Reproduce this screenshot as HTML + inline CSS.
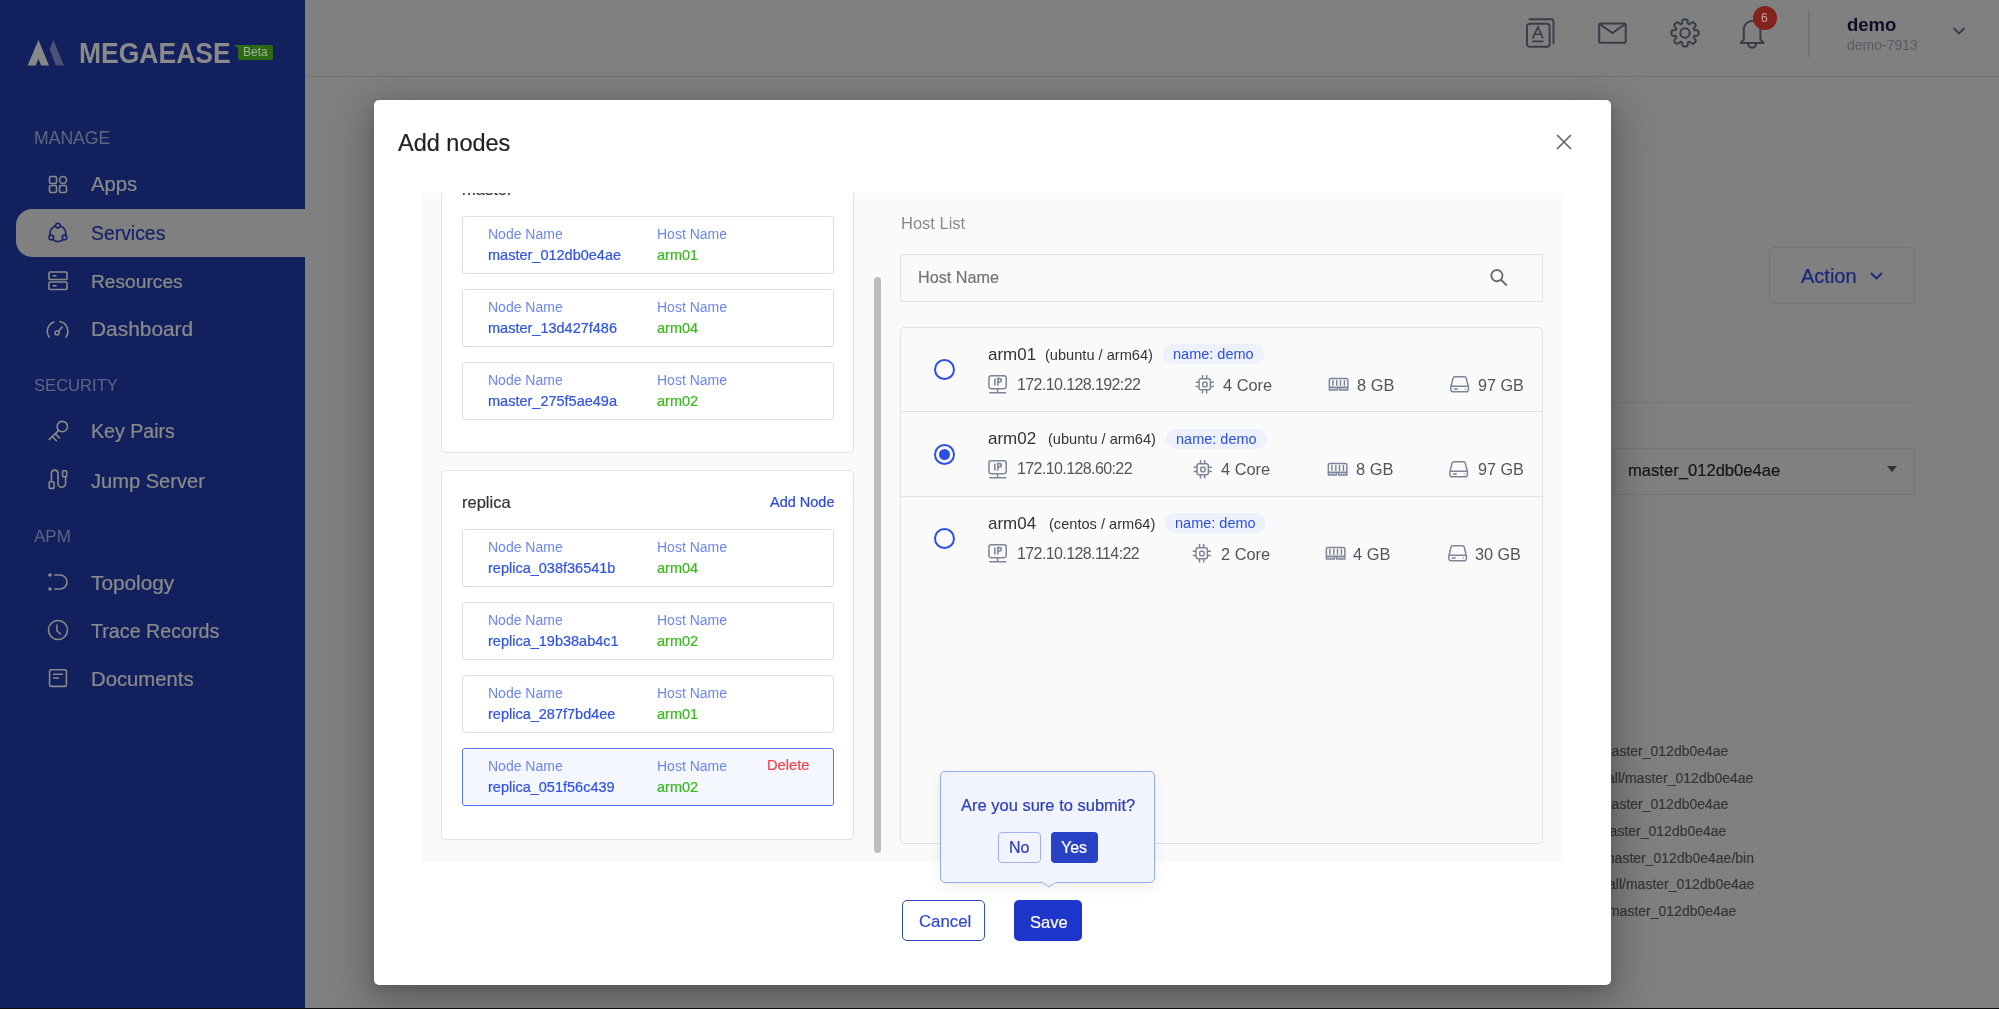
<!DOCTYPE html>
<html><head><meta charset="utf-8"><title>Add nodes</title>
<style>
html,body{margin:0;padding:0;}
body{width:1999px;height:1009px;overflow:hidden;position:relative;font-family:"Liberation Sans", sans-serif;}
.b{position:absolute;}
.t{position:absolute;white-space:nowrap;will-change:transform;}
.m{-webkit-text-stroke:0.22px currentColor;}
.m2{-webkit-text-stroke:0.2px currentColor;}
</style></head><body>
<div class="b" style="left:0px;top:0px;width:1999px;height:1009px;background:#808080;"></div>
<div class="b" style="left:305px;top:76px;width:1694px;height:1px;background:#6f7377;"></div>
<div class="b" style="left:0px;top:0px;width:305px;height:1008px;background:#12205e;"></div>
<svg class="b" style="left:24px;top:34px;" width="46" height="36" viewBox="0 0 46 36" fill="none"><path d="M14.45 5.9 L24.98 31.6 L17.1 31.6 L14.45 24.8 L11.8 31.6 L3.57 31.6 Z" fill="#878787"/><path d="M29.4 5.9 L40 31.6 L31.9 31.6 L25.7 15.3 Z" fill="#4a5276"/></svg>
<div class="t " style="left:79.00px;top:40.77px;font-size:26.5px;line-height:26.5px;color:#8a8a8a;font-weight:700;letter-spacing:0px;transform:scaleY(1.09);transform-origin:0 83%;">MEGAEASE</div>
<svg class="b" style="left:234px;top:44px" width="40" height="18" viewBox="0 0 40 18"><path d="M0 1 L4 1 Q4 1 4 1 L37 1 A2 2 0 0 1 39 3 L39 14 A2 2 0 0 1 37 16 L6 16 A2 2 0 0 1 4 14 L4 4 Z" fill="#2b6a12"/></svg>
<div class="t " style="left:243.00px;top:46.34px;font-size:12px;line-height:12px;color:#9fb59c;">Beta</div>
<div class="t " style="left:34.00px;top:129.60px;font-size:17.6px;line-height:17.6px;color:#5e6584;">MANAGE</div>
<div class="t " style="left:34.00px;top:377.95px;font-size:16.6px;line-height:16.6px;color:#5e6584;">SECURITY</div>
<div class="t " style="left:34.00px;top:528.21px;font-size:17px;line-height:17px;color:#5e6584;">APM</div>
<div class="b" style="left:16px;top:209px;width:289px;height:48px;background:#808080;border-radius:16px 0 0 16px;"></div>
<div class="t m" style="left:91.00px;top:174.02px;font-size:20.3px;line-height:20.3px;color:#8a8a8a;">Apps</div>
<div class="t m" style="left:91.00px;top:223.78px;font-size:19.4px;line-height:19.4px;color:#17226a;">Services</div>
<div class="t m" style="left:91.00px;top:272.35px;font-size:19.2px;line-height:19.2px;color:#8a8a8a;">Resources</div>
<div class="t m" style="left:91.00px;top:319.31px;font-size:20.9px;line-height:20.9px;color:#8a8a8a;">Dashboard</div>
<div class="t m" style="left:91.00px;top:422.41px;font-size:19.6px;line-height:19.6px;color:#8a8a8a;">Key Pairs</div>
<div class="t m" style="left:91.00px;top:470.99px;font-size:20.1px;line-height:20.1px;color:#8a8a8a;">Jump Server</div>
<div class="t m" style="left:91.00px;top:572.89px;font-size:20.8px;line-height:20.8px;color:#8a8a8a;">Topology</div>
<div class="t m" style="left:91.00px;top:621.62px;font-size:19.7px;line-height:19.7px;color:#8a8a8a;">Trace Records</div>
<div class="t m" style="left:91.00px;top:668.82px;font-size:20.3px;line-height:20.3px;color:#8a8a8a;">Documents</div>
<svg class="b" style="left:48px;top:175px;" width="20" height="20" viewBox="0 0 20 20" fill="none"><g stroke="#8a8a8a" stroke-width="1.6"><rect x="1.5" y="1.5" width="7" height="7" rx="1.5"/><rect x="11.5" y="1.5" width="7" height="7" rx="3.5"/><rect x="1.5" y="10.5" width="7" height="7" rx="1.5"/><rect x="11.5" y="10.5" width="7" height="7" rx="1.5"/></g></svg>
<svg class="b" style="left:47px;top:222px;" width="22" height="22" viewBox="0 0 22 22" fill="none"><g stroke="#17226a" stroke-width="1.6"><circle cx="10.9" cy="3.6" r="2.3"/><circle cx="4.3" cy="15.4" r="2.3"/><circle cx="17.5" cy="15.4" r="2.3"/><path d="M13.64 4.08 A8 8 0 0 1 18.78 12.99 M16.04 17.73 A8 8 0 0 1 5.76 17.73 M3.02 12.99 A8 8 0 0 1 8.16 4.08"/></g></svg>
<svg class="b" style="left:48px;top:271px;" width="20" height="20" viewBox="0 0 20 20" fill="none"><g stroke="#8a8a8a" stroke-width="1.6"><rect x="1" y="1" width="18" height="7.5" rx="1"/><rect x="1" y="11" width="18" height="7.5" rx="1"/><path d="M4.5 4.8 H8.5 M4.5 14.8 H8.5"/></g></svg>
<svg class="b" style="left:46px;top:318px;" width="24" height="22" viewBox="0 0 24 22" fill="none"><g stroke="#8a8a8a" stroke-width="1.6" stroke-linecap="round"><path d="M3 19 A10 10 0 0 1 8 4 M14 3.5 A10 10 0 0 1 20 19"/><circle cx="11" cy="15" r="2"/><path d="M12.5 13.5 L16 9"/></g></svg>
<svg class="b" style="left:47px;top:420px;" width="22" height="22" viewBox="0 0 22 22" fill="none"><g stroke="#8a8a8a" stroke-width="1.6" stroke-linecap="round"><circle cx="15.3" cy="6.6" r="5.2"/><path d="M11.7 10.4 L2.3 19.4 M8.9 14.4 L12.4 17.9 M6 17.3 L9.4 20.8"/></g></svg>
<svg class="b" style="left:48px;top:469px;" width="22" height="22" viewBox="0 0 22 22" fill="none"><g stroke="#8a8a8a" stroke-width="1.6"><rect x="1.2" y="12.8" width="4.8" height="6.6" rx="0.8"/><rect x="14.6" y="1.8" width="4" height="6" rx="0.8"/><path d="M3.4 12.8 V4.4 A3.3 3.3 0 0 1 10 4.4 V14.4 A3.8 3.8 0 0 0 17.6 14.4 V7.8" fill="none"/></g></svg>
<svg class="b" style="left:47px;top:572px;" width="22" height="20" viewBox="0 0 22 20" fill="none"><g stroke="#8a8a8a" stroke-width="1.6" stroke-linecap="round"><circle cx="3" cy="3" r="1" fill="#8a8a8a"/><circle cx="3" cy="17" r="1" fill="#8a8a8a"/><path d="M8 3 H13 A7 7 0 0 1 13 17 H8"/></g></svg>
<svg class="b" style="left:47px;top:619px;" width="22" height="22" viewBox="0 0 22 22" fill="none"><g stroke="#8a8a8a" stroke-width="1.6" stroke-linecap="round"><circle cx="11" cy="11" r="9.5"/><path d="M10 6 V12 L13.5 15"/></g></svg>
<svg class="b" style="left:48px;top:668px;" width="20" height="20" viewBox="0 0 20 20" fill="none"><g stroke="#8a8a8a" stroke-width="1.6"><rect x="1.6" y="1.8" width="16.8" height="16.6" rx="1.5"/><path d="M5 6.3 H15 M5 10 H11"/></g></svg>
<svg class="b" style="left:1524px;top:17px;" width="32" height="32" viewBox="0 0 32 32" fill="none"><g stroke="#373c47" stroke-width="1.9" stroke-linecap="round"><rect x="3" y="6.8" width="22.6" height="23" rx="2.8"/><path d="M5.5 2.3 H27 A2.5 2.5 0 0 1 29.5 4.8 V26.3"/><path d="M8.9 20.8 L13.9 9.9 L18.7 20.8 M10.6 17.2 H17.1 M8.7 24.4 H19" stroke-width="1.6"/></g></svg>
<svg class="b" style="left:1597px;top:21px;" width="31" height="24" viewBox="0 0 31 24" fill="none"><g stroke="#373c47" stroke-width="2" stroke-linejoin="round"><rect x="2.2" y="2.4" width="26.5" height="19.4" rx="1.6"/><path d="M2.6 3 L15.4 12 L28.2 3"/></g></svg>
<svg class="b" style="left:1668.6px;top:17.1px;" width="32" height="32" viewBox="0 0 32 32" fill="none"><g stroke="#373c47" stroke-width="2" stroke-linejoin="round"><path d="M13.13 6.63 Q13.03 2.73 14.58 2.47 A13.6 13.6 0 0 1 17.42 2.47 Q18.97 2.73 18.87 6.63 A9.8 9.8 0 0 1 20.60 7.35 Q23.29 4.52 24.56 5.43 A13.6 13.6 0 0 1 26.57 7.44 Q27.48 8.71 24.65 11.40 A9.8 9.8 0 0 1 25.37 13.13 Q29.27 13.03 29.53 14.58 A13.6 13.6 0 0 1 29.53 17.42 Q29.27 18.97 25.37 18.87 A9.8 9.8 0 0 1 24.65 20.60 Q27.48 23.29 26.57 24.56 A13.6 13.6 0 0 1 24.56 26.57 Q23.29 27.48 20.60 24.65 A9.8 9.8 0 0 1 18.87 25.37 Q18.97 29.27 17.42 29.53 A13.6 13.6 0 0 1 14.58 29.53 Q13.03 29.27 13.13 25.37 A9.8 9.8 0 0 1 11.40 24.65 Q8.71 27.48 7.44 26.57 A13.6 13.6 0 0 1 5.43 24.56 Q4.52 23.29 7.35 20.60 A9.8 9.8 0 0 1 6.63 18.87 Q2.73 18.97 2.47 17.42 A13.6 13.6 0 0 1 2.47 14.58 Q2.73 13.03 6.63 13.13 A9.8 9.8 0 0 1 7.35 11.40 Q4.52 8.71 5.43 7.44 A13.6 13.6 0 0 1 7.44 5.43 Q8.71 4.52 11.40 7.35 A9.8 9.8 0 0 1 13.13 6.63 Z"/><circle cx="16" cy="16" r="4.7"/></g></svg>
<svg class="b" style="left:1739px;top:18px;" width="28" height="33" viewBox="0 0 28 33" fill="none"><g stroke="#373c47" stroke-width="2" stroke-linejoin="round"><path d="M1.8 25 H24.5 L21.4 21.5 V11.2 A8.3 8.3 0 0 0 4.8 11.2 V21.5 Z"/><path d="M9 25.6 A4.1 4.1 0 0 0 17.2 25.6"/></g></svg>
<div class="b" style="left:1753px;top:6px;width:24px;height:24px;border-radius:50%;background:#82231d;"></div>
<div class="t " style="left:1761.30px;top:12.44px;font-size:12px;line-height:12px;color:#c9a19d;">6</div>
<div class="b" style="left:1808px;top:10px;width:2px;height:47px;background:#737373;"></div>
<div class="t " style="left:1847.00px;top:16.24px;font-size:18.5px;line-height:18.5px;color:#0b0e25;font-weight:700;">demo</div>
<div class="t " style="left:1847.00px;top:37.85px;font-size:14px;line-height:14px;color:#5a5c66;">demo-7913</div>
<svg class="b" style="left:1952px;top:26px;" width="14" height="11" viewBox="0 0 14 11" fill="none"><path d="M1.5 2 L7 7.5 L12.5 2" stroke="#373c47" stroke-width="1.8" fill="none"/></svg>
<div class="b" style="left:1769px;top:247px;width:146px;height:57px;border:1px solid #747474;border-radius:5px;box-sizing:border-box;"></div>
<div class="t m" style="left:1801.00px;top:265.87px;font-size:20px;line-height:20px;color:#18287f;">Action</div>
<svg class="b" style="left:1869px;top:270px;" width="16" height="12" viewBox="0 0 16 12" fill="none"><path d="M2 3 L7.5 8.5 L13 3" stroke="#18287f" stroke-width="1.8" fill="none"/></svg>
<div class="b" style="left:1600px;top:402px;width:315px;height:1px;background:#787878;"></div>
<div class="b" style="left:1614px;top:448px;width:301px;height:47px;border:1px solid #747474;border-radius:3px;box-sizing:border-box;"></div>
<div class="t m2" style="left:1628.00px;top:462.95px;font-size:16.6px;line-height:16.6px;color:#151515;">master_012db0e4ae</div>
<svg class="b" style="left:1886px;top:465px;" width="12" height="8" viewBox="0 0 12 8" fill="none"><path d="M1 1 L11 1 L6 7 Z" fill="#333"/></svg>
<div class="t m2" style="right:270.60px;top:743.90px;font-size:14px;line-height:14px;color:#363636;">megaease/install/master_012db0e4ae</div>
<div class="t m2" style="right:246.10px;top:770.95px;font-size:14px;line-height:14px;color:#363636;">megaease/install/master_012db0e4ae</div>
<div class="t m2" style="right:270.70px;top:797.05px;font-size:14px;line-height:14px;color:#363636;">megaease/install/master_012db0e4ae</div>
<div class="t m2" style="right:272.60px;top:824.05px;font-size:14px;line-height:14px;color:#363636;">megaease/install/master_012db0e4ae</div>
<div class="t m2" style="right:245.30px;top:850.75px;font-size:14px;line-height:14px;color:#363636;">megaease/install/master_012db0e4ae/bin</div>
<div class="t m2" style="right:245.00px;top:877.35px;font-size:14px;line-height:14px;color:#363636;">megaease/install/master_012db0e4ae</div>
<div class="t m2" style="right:262.20px;top:904.15px;font-size:14px;line-height:14px;color:#363636;">megaease/install/master_012db0e4ae</div>
<div class="b" style="left:373.6px;top:100.4px;width:1237.6px;height:884.7px;background:#fff;border-radius:5px;box-shadow:0 12px 40px 8px rgba(0,0,0,0.25), 0 4px 12px rgba(0,0,0,0.14);"></div>
<div class="t m2" style="left:398.00px;top:131.81px;font-size:23.5px;line-height:23.5px;color:#222222;">Add nodes</div>
<svg class="b" style="left:1555px;top:133px;" width="18" height="18" viewBox="0 0 18 18" fill="none"><path d="M2 2 L16 16 M16 2 L2 16" stroke="#666" stroke-width="1.7"/></svg>
<div class="b" style="left:422px;top:193px;width:1141px;height:669px;background:#fafafa;"></div>
<div class="b" style="left:441px;top:193px;width:413px;height:669px;overflow:hidden;">
<div class="b" style="left:0px;top:-60px;width:413px;height:320px;background:#fff;border:1px solid #e3e3e3;border-radius:4px;box-sizing:border-box;"></div>
<div class="b" style="left:0px;top:277px;width:413px;height:370px;background:#fff;border:1px solid #e3e3e3;border-radius:4px;box-sizing:border-box;"></div>
</div>
<div class="b" style="left:441px;top:193px;width:413px;height:4px;overflow:hidden;">
<div class="t m2" style="left:21.00px;top:-12.27px;font-size:16.5px;line-height:16.5px;color:#333;">master</div>
<div class="t " style="left:329.00px;top:-11.57px;font-size:14.5px;line-height:14.5px;color:#c8d1f5;">Add Node</div>
</div>
<div class="b" style="left:462px;top:215.5px;width:372px;height:58.0px;background:#fff;border:1.5px solid #dedede;border-radius:3px;box-sizing:border-box;"></div>
<div class="t " style="left:487.50px;top:227.15px;font-size:14px;line-height:14px;color:#6b86f2;">Node Name</div>
<div class="t m" style="left:487.50px;top:248.03px;font-size:14.5px;line-height:14.5px;color:#3053e6;">master_012db0e4ae</div>
<div class="t " style="left:656.50px;top:227.15px;font-size:14px;line-height:14px;color:#6b86f2;">Host Name</div>
<div class="t m" style="left:656.50px;top:248.03px;font-size:14.5px;line-height:14.5px;color:#3cb81e;">arm01</div>
<div class="b" style="left:462px;top:288.5px;width:372px;height:58.0px;background:#fff;border:1.5px solid #dedede;border-radius:3px;box-sizing:border-box;"></div>
<div class="t " style="left:487.50px;top:300.15px;font-size:14px;line-height:14px;color:#6b86f2;">Node Name</div>
<div class="t m" style="left:487.50px;top:321.03px;font-size:14.5px;line-height:14.5px;color:#3053e6;">master_13d427f486</div>
<div class="t " style="left:656.50px;top:300.15px;font-size:14px;line-height:14px;color:#6b86f2;">Host Name</div>
<div class="t m" style="left:656.50px;top:321.03px;font-size:14.5px;line-height:14.5px;color:#3cb81e;">arm04</div>
<div class="b" style="left:462px;top:361.5px;width:372px;height:58.0px;background:#fff;border:1.5px solid #dedede;border-radius:3px;box-sizing:border-box;"></div>
<div class="t " style="left:487.50px;top:373.15px;font-size:14px;line-height:14px;color:#6b86f2;">Node Name</div>
<div class="t m" style="left:487.50px;top:394.03px;font-size:14.5px;line-height:14.5px;color:#3053e6;">master_275f5ae49a</div>
<div class="t " style="left:656.50px;top:373.15px;font-size:14px;line-height:14px;color:#6b86f2;">Host Name</div>
<div class="t m" style="left:656.50px;top:394.03px;font-size:14.5px;line-height:14.5px;color:#3cb81e;">arm02</div>
<div class="t m2" style="left:462.00px;top:493.63px;font-size:16.5px;line-height:16.5px;color:#333333;">replica</div>
<div class="t m2" style="right:1165.00px;top:494.73px;font-size:14.5px;line-height:14.5px;color:#2b48de;">Add Node</div>
<div class="b" style="left:462px;top:528.5px;width:372px;height:58.0px;background:#fff;border:1.5px solid #dedede;border-radius:3px;box-sizing:border-box;"></div>
<div class="t " style="left:487.50px;top:540.15px;font-size:14px;line-height:14px;color:#6b86f2;">Node Name</div>
<div class="t m" style="left:487.50px;top:561.03px;font-size:14.5px;line-height:14.5px;color:#3053e6;">replica_038f36541b</div>
<div class="t " style="left:656.50px;top:540.15px;font-size:14px;line-height:14px;color:#6b86f2;">Host Name</div>
<div class="t m" style="left:656.50px;top:561.03px;font-size:14.5px;line-height:14.5px;color:#3cb81e;">arm04</div>
<div class="b" style="left:462px;top:601.5px;width:372px;height:58.0px;background:#fff;border:1.5px solid #dedede;border-radius:3px;box-sizing:border-box;"></div>
<div class="t " style="left:487.50px;top:613.15px;font-size:14px;line-height:14px;color:#6b86f2;">Node Name</div>
<div class="t m" style="left:487.50px;top:634.03px;font-size:14.5px;line-height:14.5px;color:#3053e6;">replica_19b38ab4c1</div>
<div class="t " style="left:656.50px;top:613.15px;font-size:14px;line-height:14px;color:#6b86f2;">Host Name</div>
<div class="t m" style="left:656.50px;top:634.03px;font-size:14.5px;line-height:14.5px;color:#3cb81e;">arm02</div>
<div class="b" style="left:462px;top:674.5px;width:372px;height:58.0px;background:#fff;border:1.5px solid #dedede;border-radius:3px;box-sizing:border-box;"></div>
<div class="t " style="left:487.50px;top:686.15px;font-size:14px;line-height:14px;color:#6b86f2;">Node Name</div>
<div class="t m" style="left:487.50px;top:707.03px;font-size:14.5px;line-height:14.5px;color:#3053e6;">replica_287f7bd4ee</div>
<div class="t " style="left:656.50px;top:686.15px;font-size:14px;line-height:14px;color:#6b86f2;">Host Name</div>
<div class="t m" style="left:656.50px;top:707.03px;font-size:14.5px;line-height:14.5px;color:#3cb81e;">arm01</div>
<div class="b" style="left:462px;top:747.5px;width:372px;height:58.0px;background:#f4f7fe;border:1.8px solid #5675f0;border-radius:3px;box-sizing:border-box;"></div>
<div class="t " style="left:487.50px;top:759.15px;font-size:14px;line-height:14px;color:#6b86f2;">Node Name</div>
<div class="t m" style="left:487.50px;top:780.03px;font-size:14.5px;line-height:14.5px;color:#3053e6;">replica_051f56c439</div>
<div class="t " style="left:656.50px;top:759.15px;font-size:14px;line-height:14px;color:#6b86f2;">Host Name</div>
<div class="t m" style="left:656.50px;top:780.03px;font-size:14.5px;line-height:14.5px;color:#3cb81e;">arm02</div>
<div class="t m2" style="left:766.50px;top:758.36px;font-size:14.7px;line-height:14.7px;color:#f2424b;">Delete</div>
<div class="b" style="left:874px;top:277px;width:7px;height:576px;background:#bdbdbd;border-radius:4px;"></div>
<div class="t " style="left:901.00px;top:214.83px;font-size:16.5px;line-height:16.5px;color:#8a8a8a;">Host List</div>
<div class="b" style="left:900px;top:254px;width:643px;height:48px;border:1px solid #e0e0e0;border-radius:2px;box-sizing:border-box;background:#fafafa;"></div>
<div class="t m2" style="left:918.00px;top:268.69px;font-size:16.2px;line-height:16.2px;color:#747474;">Host Name</div>
<svg class="b" style="left:1488px;top:266px;" width="22" height="22" viewBox="0 0 22 22" fill="none"><g stroke="#6e6e6e" stroke-width="1.9"><circle cx="8.9" cy="9.6" r="5.6"/><path d="M12.8 13.5 L18.8 19.5"/></g></svg>
<div class="b" style="left:900px;top:327px;width:643px;height:517px;border:1px solid #e3e3e3;border-radius:4px;box-sizing:border-box;background:#fafafa;"></div>
<div class="b" style="left:901px;top:411px;width:641px;height:1px;background:#e3e3e3;"></div>
<div class="b" style="left:901px;top:496px;width:641px;height:1px;background:#e3e3e3;"></div>
<div class="b" style="left:934px;top:359.0px;width:21px;height:21px;border:2px solid #2b4fe6;border-radius:50%;box-sizing:border-box;"></div>
<div class="t " style="left:987.50px;top:345.81px;font-size:17px;line-height:17px;color:#333333;">arm01</div>
<div class="t " style="left:1044.50px;top:347.84px;font-size:14.6px;line-height:14.6px;color:#333333;">(ubuntu / arm64)</div>
<div class="b" style="left:1163px;top:344px;width:101px;height:20px;background:#edf1fd;border-radius:10px;"></div>
<div class="t " style="left:1172.50px;top:347.13px;font-size:14.5px;line-height:14.5px;color:#2c4ee2;">name: demo</div>
<svg class="b" style="left:988px;top:375px;" width="20" height="20" viewBox="0 0 20 20" fill="none"><g stroke="#7f8598" stroke-width="1.5"><rect x="0.95" y="0.75" width="17.3" height="12.9" rx="2.3"/><path d="M9.6 13.6 V17.6 M1.2 17.7 H18.2"/><path d="M6.9 3.5 V10.5 M9.9 10.5 V3.6 H11.6 A1.7 1.7 0 0 1 11.6 7 H9.9" stroke-width="1.6"/></g></svg>
<div class="t " style="left:1016.50px;top:376.96px;font-size:16px;line-height:16px;color:#555555;letter-spacing:-0.6px;">172.10.128.192:22</div>
<svg class="b" style="left:1194.7px;top:374px;" width="20" height="20" viewBox="0 0 20 20" fill="none"><g stroke="#7f8598" stroke-width="1.5"><rect x="4.05" y="4.75" width="11.3" height="11.1" rx="2"/><rect x="7.75" y="8.15" width="4.3" height="4.6" rx="1.2"/><path d="M7.5 1 V4.75 M11.7 1 V4.75 M7.5 15.85 V19.4 M11.7 15.85 V19.4 M0.7 8.2 H4.05 M0.7 12.4 H4.05 M15.35 8.2 H18.9 M15.35 12.4 H18.9"/></g></svg>
<div class="t " style="left:1222.80px;top:376.62px;font-size:16.4px;line-height:16.4px;color:#555555;">4 Core</div>
<svg class="b" style="left:1328.4px;top:377px;" width="22" height="15" viewBox="0 0 22 15" fill="none"><g stroke="#7f8598" stroke-width="1.5" stroke-linejoin="round"><path d="M1.35 10.2 V2.9 A1.45 1.45 0 0 1 2.8 1.45 H18.4 A1.45 1.45 0 0 1 19.85 2.9 V10.2 Z M1.35 10.2 V13.05 H9.4 L9.7 10.2 M11.5 10.2 L11.8 13.05 H19.85 V10.2"/><path d="M2.2 11.6 H8.6 M12.6 11.6 H19" stroke-opacity="0.45" stroke-width="1.3"/><path d="M4.9 3.6 V8.2 M8.8 3.6 V8.2 M12.5 3.6 V8.2 M16.4 3.6 V8.2" stroke-linecap="round"/></g></svg>
<div class="t " style="left:1357.00px;top:376.62px;font-size:16.4px;line-height:16.4px;color:#555555;">8 GB</div>
<svg class="b" style="left:1450.4px;top:376px;" width="20" height="17" viewBox="0 0 20 17" fill="none"><g stroke="#7f8598" stroke-width="1.5" stroke-linejoin="round"><path d="M0.85 11 L2.9 2.6 Q3.3 0.75 5 0.75 H14.3 Q16 0.75 16.4 2.6 L18.45 11 V13.6 A2.15 2.15 0 0 1 16.3 15.75 H3 A2.15 2.15 0 0 1 0.85 13.6 Z M1.2 10.3 H18.1"/><path d="M4.3 13 H7.2" stroke-width="1.5" stroke-linecap="round"/><path d="M15.4 12.5 V13.5" stroke-width="1.3"/></g></svg>
<div class="t " style="left:1477.70px;top:376.79px;font-size:16.2px;line-height:16.2px;color:#555555;">97 GB</div>
<div class="b" style="left:934px;top:443.5px;width:21px;height:21px;border:2px solid #2b4fe6;border-radius:50%;box-sizing:border-box;"></div>
<div class="b" style="left:939px;top:448.5px;width:11px;height:11px;background:#2b4fe6;border-radius:50%;"></div>
<div class="t " style="left:987.50px;top:430.31px;font-size:17px;line-height:17px;color:#333333;">arm02</div>
<div class="t " style="left:1047.50px;top:432.34px;font-size:14.6px;line-height:14.6px;color:#333333;">(ubuntu / arm64)</div>
<div class="b" style="left:1166px;top:428.5px;width:101px;height:20px;background:#edf1fd;border-radius:10px;"></div>
<div class="t " style="left:1175.50px;top:431.63px;font-size:14.5px;line-height:14.5px;color:#2c4ee2;">name: demo</div>
<svg class="b" style="left:988px;top:459.5px;" width="20" height="20" viewBox="0 0 20 20" fill="none"><g stroke="#7f8598" stroke-width="1.5"><rect x="0.95" y="0.75" width="17.3" height="12.9" rx="2.3"/><path d="M9.6 13.6 V17.6 M1.2 17.7 H18.2"/><path d="M6.9 3.5 V10.5 M9.9 10.5 V3.6 H11.6 A1.7 1.7 0 0 1 11.6 7 H9.9" stroke-width="1.6"/></g></svg>
<div class="t " style="left:1016.50px;top:461.46px;font-size:16px;line-height:16px;color:#555555;letter-spacing:-0.6px;">172.10.128.60:22</div>
<svg class="b" style="left:1192.7px;top:458.5px;" width="20" height="20" viewBox="0 0 20 20" fill="none"><g stroke="#7f8598" stroke-width="1.5"><rect x="4.05" y="4.75" width="11.3" height="11.1" rx="2"/><rect x="7.75" y="8.15" width="4.3" height="4.6" rx="1.2"/><path d="M7.5 1 V4.75 M11.7 1 V4.75 M7.5 15.85 V19.4 M11.7 15.85 V19.4 M0.7 8.2 H4.05 M0.7 12.4 H4.05 M15.35 8.2 H18.9 M15.35 12.4 H18.9"/></g></svg>
<div class="t " style="left:1220.80px;top:461.12px;font-size:16.4px;line-height:16.4px;color:#555555;">4 Core</div>
<svg class="b" style="left:1327.4px;top:461.5px;" width="22" height="15" viewBox="0 0 22 15" fill="none"><g stroke="#7f8598" stroke-width="1.5" stroke-linejoin="round"><path d="M1.35 10.2 V2.9 A1.45 1.45 0 0 1 2.8 1.45 H18.4 A1.45 1.45 0 0 1 19.85 2.9 V10.2 Z M1.35 10.2 V13.05 H9.4 L9.7 10.2 M11.5 10.2 L11.8 13.05 H19.85 V10.2"/><path d="M2.2 11.6 H8.6 M12.6 11.6 H19" stroke-opacity="0.45" stroke-width="1.3"/><path d="M4.9 3.6 V8.2 M8.8 3.6 V8.2 M12.5 3.6 V8.2 M16.4 3.6 V8.2" stroke-linecap="round"/></g></svg>
<div class="t " style="left:1356.00px;top:461.12px;font-size:16.4px;line-height:16.4px;color:#555555;">8 GB</div>
<svg class="b" style="left:1449.4px;top:460.5px;" width="20" height="17" viewBox="0 0 20 17" fill="none"><g stroke="#7f8598" stroke-width="1.5" stroke-linejoin="round"><path d="M0.85 11 L2.9 2.6 Q3.3 0.75 5 0.75 H14.3 Q16 0.75 16.4 2.6 L18.45 11 V13.6 A2.15 2.15 0 0 1 16.3 15.75 H3 A2.15 2.15 0 0 1 0.85 13.6 Z M1.2 10.3 H18.1"/><path d="M4.3 13 H7.2" stroke-width="1.5" stroke-linecap="round"/><path d="M15.4 12.5 V13.5" stroke-width="1.3"/></g></svg>
<div class="t " style="left:1477.70px;top:461.29px;font-size:16.2px;line-height:16.2px;color:#555555;">97 GB</div>
<div class="b" style="left:934px;top:528.3px;width:21px;height:21px;border:2px solid #2b4fe6;border-radius:50%;box-sizing:border-box;"></div>
<div class="t " style="left:987.50px;top:515.11px;font-size:17px;line-height:17px;color:#333333;">arm04</div>
<div class="t " style="left:1048.50px;top:517.14px;font-size:14.6px;line-height:14.6px;color:#333333;">(centos / arm64)</div>
<div class="b" style="left:1165px;top:513.3px;width:101px;height:20px;background:#edf1fd;border-radius:10px;"></div>
<div class="t " style="left:1174.50px;top:516.43px;font-size:14.5px;line-height:14.5px;color:#2c4ee2;">name: demo</div>
<svg class="b" style="left:988px;top:544.3px;" width="20" height="20" viewBox="0 0 20 20" fill="none"><g stroke="#7f8598" stroke-width="1.5"><rect x="0.95" y="0.75" width="17.3" height="12.9" rx="2.3"/><path d="M9.6 13.6 V17.6 M1.2 17.7 H18.2"/><path d="M6.9 3.5 V10.5 M9.9 10.5 V3.6 H11.6 A1.7 1.7 0 0 1 11.6 7 H9.9" stroke-width="1.6"/></g></svg>
<div class="t " style="left:1016.50px;top:546.26px;font-size:16px;line-height:16px;color:#555555;letter-spacing:-0.6px;">172.10.128.114:22</div>
<svg class="b" style="left:1192px;top:543.3px;" width="20" height="20" viewBox="0 0 20 20" fill="none"><g stroke="#7f8598" stroke-width="1.5"><rect x="4.05" y="4.75" width="11.3" height="11.1" rx="2"/><rect x="7.75" y="8.15" width="4.3" height="4.6" rx="1.2"/><path d="M7.5 1 V4.75 M11.7 1 V4.75 M7.5 15.85 V19.4 M11.7 15.85 V19.4 M0.7 8.2 H4.05 M0.7 12.4 H4.05 M15.35 8.2 H18.9 M15.35 12.4 H18.9"/></g></svg>
<div class="t " style="left:1220.50px;top:545.92px;font-size:16.4px;line-height:16.4px;color:#555555;">2 Core</div>
<svg class="b" style="left:1325px;top:546.3px;" width="22" height="15" viewBox="0 0 22 15" fill="none"><g stroke="#7f8598" stroke-width="1.5" stroke-linejoin="round"><path d="M1.35 10.2 V2.9 A1.45 1.45 0 0 1 2.8 1.45 H18.4 A1.45 1.45 0 0 1 19.85 2.9 V10.2 Z M1.35 10.2 V13.05 H9.4 L9.7 10.2 M11.5 10.2 L11.8 13.05 H19.85 V10.2"/><path d="M2.2 11.6 H8.6 M12.6 11.6 H19" stroke-opacity="0.45" stroke-width="1.3"/><path d="M4.9 3.6 V8.2 M8.8 3.6 V8.2 M12.5 3.6 V8.2 M16.4 3.6 V8.2" stroke-linecap="round"/></g></svg>
<div class="t " style="left:1353.40px;top:545.92px;font-size:16.4px;line-height:16.4px;color:#555555;">4 GB</div>
<svg class="b" style="left:1447.6px;top:545.3px;" width="20" height="17" viewBox="0 0 20 17" fill="none"><g stroke="#7f8598" stroke-width="1.5" stroke-linejoin="round"><path d="M0.85 11 L2.9 2.6 Q3.3 0.75 5 0.75 H14.3 Q16 0.75 16.4 2.6 L18.45 11 V13.6 A2.15 2.15 0 0 1 16.3 15.75 H3 A2.15 2.15 0 0 1 0.85 13.6 Z M1.2 10.3 H18.1"/><path d="M4.3 13 H7.2" stroke-width="1.5" stroke-linecap="round"/><path d="M15.4 12.5 V13.5" stroke-width="1.3"/></g></svg>
<div class="t " style="left:1475.30px;top:546.09px;font-size:16.2px;line-height:16.2px;color:#555555;">30 GB</div>
<div class="b" style="left:902px;top:900px;width:83px;height:41px;border:1.5px solid #3048cf;border-radius:5px;box-sizing:border-box;background:#fff;"></div>
<div class="t m2" style="left:918.50px;top:913.78px;font-size:16.8px;line-height:16.8px;color:#3048cf;">Cancel</div>
<div class="b" style="left:1014px;top:900px;width:68px;height:41px;background:#1d35c8;border-radius:5px;"></div>
<div class="t m2" style="left:1030.00px;top:913.53px;font-size:16.5px;line-height:16.5px;color:#ffffff;">Save</div>
<div class="b" style="left:940px;top:771px;width:215px;height:112px;background:#f1f4fe;border:1px solid #98a8ec;border-radius:5px;box-sizing:border-box;box-shadow:0 4px 14px rgba(0,0,0,0.07);"></div>
<svg class="b" style="left:1042px;top:881px;" width="14" height="7" viewBox="0 0 14 7" fill="none"><path d="M0 1 L7 6 L14 1" fill="#f1f4fe" stroke="#98a8ec" stroke-width="1"/><rect x="0" y="0" width="14" height="1.3" fill="#f1f4fe"/></svg>
<div class="t m" style="left:961.00px;top:797.03px;font-size:16.5px;line-height:16.5px;color:#2c3fb6;">Are you sure to submit?</div>
<div class="b" style="left:998px;top:832px;width:43px;height:31px;border:1px solid #a3b1ee;border-radius:4px;box-sizing:border-box;background:#f1f4fe;"></div>
<div class="t m" style="left:1008.50px;top:839.66px;font-size:16px;line-height:16px;color:#2c3fb6;">No</div>
<div class="b" style="left:1051px;top:832px;width:47px;height:31px;background:#2941c4;border-radius:4px;"></div>
<div class="t m2" style="left:1061.00px;top:839.66px;font-size:16px;line-height:16px;color:#ffffff;">Yes</div>
<div class="b" style="left:0px;top:1008px;width:1999px;height:1px;background:#0b0b0b;"></div>
</body></html>
